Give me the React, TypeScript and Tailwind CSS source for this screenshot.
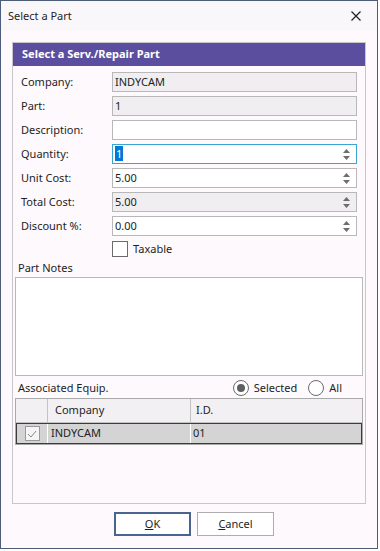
import React from 'react';

const font = { fontFamily: '"Noto Sans", "Open Sans", sans-serif' };

const Spinner = () => (
  <div className="flex flex-col items-center justify-center gap-[3px] pr-[6px]">
    <svg width="7" height="4" viewBox="0 0 7 4"><path d="M0 4 L3.5 0 L7 4 Z" fill="#6d6d6d" /></svg>
    <svg width="7" height="4" viewBox="0 0 7 4"><path d="M0 0 L3.5 4 L7 0 Z" fill="#6d6d6d" /></svg>
  </div>
);

interface FieldProps {
  label: string;
  value?: string;
  readOnly?: boolean;
  spin?: boolean;
  focused?: boolean;
}

const Field: React.FC<FieldProps> = ({ label, value, readOnly, spin, focused }) => (
  <div className="flex items-center h-[20px] mb-[4px]">
    <div className="w-[99px] pl-[8px] text-[11px] text-[#1e1e1e]">{label}</div>
    <div
      className={`flex-1 h-[20px] flex items-center border ${focused ? 'border-[#3aa6cf]' : 'border-[#b8b8b8]'} ${readOnly ? 'bg-[#f0eef0]' : 'bg-white'}`}
    >
      <div className="flex-1 pl-[2px] text-[11px] text-[#1e1e1e] leading-[16px]">
        {focused ? <span className="bg-[#0078d7] text-white px-[1px]">{value}</span> : value}
      </div>
      {spin && <Spinner />}
    </div>
  </div>
);

const Radio: React.FC<{ checked?: boolean; label: string }> = ({ checked, label }) => (
  <div className="flex items-center gap-[5px]">
    <div className="w-[16px] h-[16px] rounded-full border border-[#6b6b6b] bg-white flex items-center justify-center">
      {checked && <div className="w-[8px] h-[8px] rounded-full bg-[#5f5f5f]" />}
    </div>
    <span className="text-[11px] text-[#1e1e1e]">{label}</span>
  </div>
);

export default function App() {
  return (
    <div className="w-[380px] h-[551px] bg-white" style={font}>
      <div className="w-[378px] h-[549px] border border-[#4d5c78] bg-[#fdf9fd] flex flex-col">
        {/* Title bar */}
        <div className="h-[30px] flex items-center justify-between pl-[7px] pr-[16px] bg-[#faf7fa]">
          <span className="text-[11px] text-[#1e1e1e]">Select a Part</span>
          <svg width="10" height="10" viewBox="0 0 10 10">
            <path d="M0.5 0.5 L9.5 9.5 M9.5 0.5 L0.5 9.5" stroke="#1e1e1e" strokeWidth="1.2" />
          </svg>
        </div>

        {/* Panel */}
        <div className="mt-[11px] mx-[11px] h-[462px] border border-[#c9c6c9] bg-[#fdf9fd] flex flex-col">
          <div className="h-[23px] bg-[#5b4e9f] flex items-center pl-[9px]">
            <span className="text-[11px] font-bold text-white">Select a Serv./Repair Part</span>
          </div>

          <div className="pt-[6px] pr-[8px]">
            <Field label="Company:" value="INDYCAM" readOnly />
            <Field label="Part:" value="1" readOnly />
            <Field label="Description:" value="" />
            <Field label="Quantity:" value="1" spin focused />
            <Field label="Unit Cost:" value="5.00" spin />
            <Field label="Total Cost:" value="5.00" spin readOnly />
            <Field label="Discount %:" value="0.00" spin />
          </div>

          <div className="flex items-center h-[16px] pl-[99px] mt-[1px]">
            <div className="w-[16px] h-[16px] border border-[#6b6b6b] bg-white" />
            <span className="ml-[5px] text-[11px] text-[#1e1e1e]">Taxable</span>
          </div>

          <div className="pl-[2px] pr-[2px] mt-[3px]">
            <div className="pl-[3px] text-[11px] text-[#1e1e1e] h-[16px] leading-[16px]">Part Notes</div>
            <div className="mt-[1px] h-[99px] border border-[#b8b8b8] bg-white" />
          </div>

          <div className="flex items-center justify-between pl-[5px] pr-[23px] h-[20px] mt-[2px]">
            <span className="text-[11px] text-[#1e1e1e]">Associated Equip.</span>
            <div className="flex items-center gap-[11px]">
              <Radio checked label="Selected" />
              <Radio label="All" />
            </div>
          </div>

          <div className="ml-[2px] mr-[2px] mt-[0px] border border-[#a9a9a9] bg-white">
            <div className="flex h-[24px] bg-[#f3f0f3] border-b border-[#c2c2c2] text-[11px] text-[#1e1e1e]">
              <div className="w-[32px] border-r border-[#c2c2c2]" />
              <div className="w-[143px] border-r border-[#c2c2c2] flex items-center pl-[7px]">Company</div>
              <div className="flex-1 flex items-center pl-[5px]">I.D.</div>
            </div>
            <div className="flex h-[21px] bg-[#d4d4d4] border border-[#3c3c3c] text-[11px] text-[#1e1e1e]">
              <div className="w-[31px] border-r border-white flex items-center justify-center">
                <div className="w-[15px] h-[15px] border border-[#9a9a9a] bg-[#f5f5f5] flex items-center justify-center">
                  <svg width="10" height="8" viewBox="0 0 10 8">
                    <path d="M1 4 L4 7 L9 1" stroke="#8a8a8a" strokeWidth="1" fill="none" />
                  </svg>
                </div>
              </div>
              <div className="w-[143px] border-r border-white flex items-center pl-[3px]">INDYCAM</div>
              <div className="flex-1 flex items-center pl-[2px]">01</div>
            </div>
          </div>
        </div>

        {/* Buttons */}
        <div className="flex gap-[6px] mt-[8px] pl-[113px]">
          <button className="w-[77px] h-[24px] border-2 border-[#4a6490] bg-white text-[11px] text-[#1e1e1e]">
            <span className="underline">O</span>K
          </button>
          <button className="w-[77px] h-[24px] border border-[#adadad] bg-white text-[11px] text-[#1e1e1e]">
            <span className="underline">C</span>ancel
          </button>
        </div>
      </div>
    </div>
  );
}
